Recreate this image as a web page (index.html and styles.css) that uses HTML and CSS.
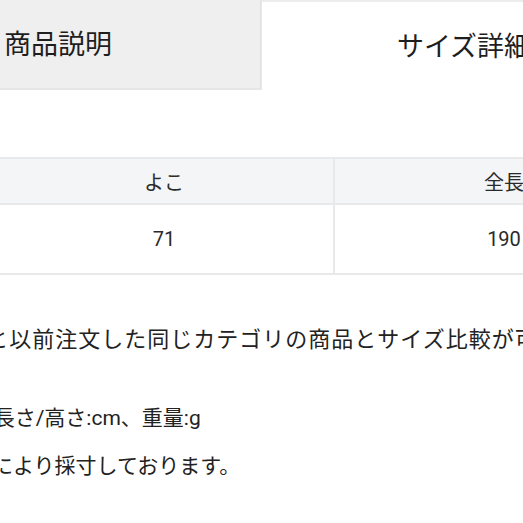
FILE: index.html
```html
<!DOCTYPE html>
<html lang="ja">
<head>
<meta charset="utf-8">
<link rel="stylesheet" href="styles.css">
</head>
<body>
<div class="page">
  <div class="tabs">
    <div class="tab tab-off">商品説明</div>
    <div class="tab tab-on">サイズ詳細</div>
  </div>
  <table class="size-table">
    <thead>
      <tr><th>よこ</th><th>全長</th></tr>
    </thead>
    <tbody>
      <tr><td>71</td><td>190</td></tr>
    </tbody>
  </table>
  <p class="note note-lead">サイズを選択すると以前注文した同じカテゴリの商品とサイズ比較が可能です。</p>
  <p class="note note-unit">幅/長さ/高さ:cm、重量:g</p>
  <p class="note note-measure">測定方法により採寸しております。</p>
</div>
</body>
</html>
```
FILE: styles.css
```css
html, body {
  margin: 0;
  padding: 0;
  background: #ffffff;
  overflow: hidden;
}
body {
  width: 523px;
  height: 523px;
  font-family: "Roboto", "Noto Sans CJK JP", "Noto Sans", sans-serif;
  color: #222;
}
.page {
  margin-left: -144px;
  width: 820px;
}
.tabs {
  display: flex;
  height: 90px;
}
.tab {
  width: 405px;
  box-sizing: border-box;
  display: flex;
  align-items: center;
  justify-content: center;
  padding-bottom: 3px;
  font-family: "Noto Sans CJK JP", sans-serif;
  font-size: 27px;
  color: #1e1e1e;
}
.tab-off {
  background: #efefef;
  border-bottom: 2px solid #e6e6e6;
  border-right: 1px solid #e2e2e2;
}
.tab-on {
  background: #fff;
  border-top: 2px solid #ececec;
  border-left: 1px solid #e6e6e6;
}
.size-table {
  margin-top: 67px;
  margin-left: 137px;
  border-collapse: collapse;
  font-size: 20px;
  color: #2a2a2a;
}
.size-table th,
.size-table td {
  width: 338px;
  padding: 0;
  text-align: center;
  font-weight: normal;
  border-top: 2px solid #e7e9eb;
  border-bottom: 2px solid #e7e9eb;
  border-left: 2px solid #e7e9eb;
}
.size-table th {
  background: #f3f5f7;
  height: 44px;
}
.size-table td {
  height: 68px;
}
.note {
  margin: 0;
  white-space: nowrap;
  font-size: 21px;
  line-height: 32px;
  color: #222;
}
.note-lead {
  margin-top: 49px;
  font-size: 22px;
  letter-spacing: 1px;
  margin-left: -53px;
}
.note-unit {
  margin-top: 46px;
  margin-left: 108px;
}
.note-measure {
  margin-top: 16px;
  margin-left: 52px;
}
```
